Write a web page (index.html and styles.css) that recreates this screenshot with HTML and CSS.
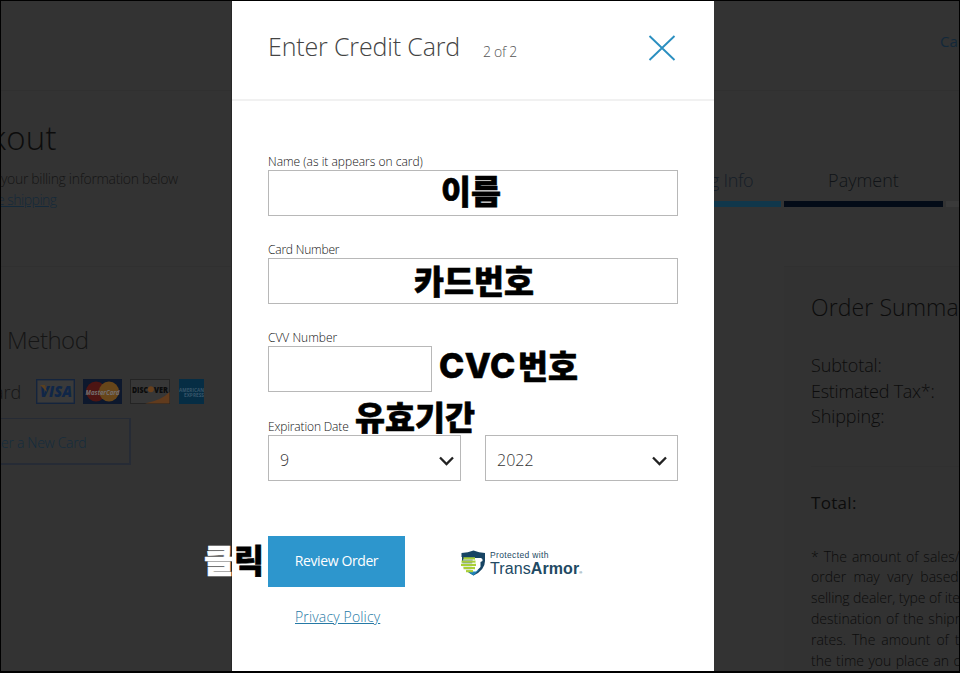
FILE: index.html
```html
<!DOCTYPE html>
<html lang="ko">
<head>
<meta charset="utf-8">
<title>Checkout</title>
<link rel="stylesheet" href="styles.css">
</head>
<body>
<div class="screen">
  <section class="left">
    <div class="topbar"></div>
    <div class="intro">
      <h1>kout</h1>
      <p class="billing">your billing information below</p>
      <a class="shipping">e shipping</a>
    </div>
    <h2 class="method">Method</h2>
    <div class="cards">
      <span class="card-label">ard</span>
      <svg width="39" height="25" viewBox="0 0 39 25"><rect x=".7" y=".7" width="37.6" height="23.6" fill="#3a3a3a" stroke="#14243d" stroke-width="1.4"/><text x="4" y="18" class="visa" textLength="32" lengthAdjust="spacingAndGlyphs">VISA</text><path d="M4 6h5l2 7z" fill="#594020"/></svg>
      <svg width="39" height="25" viewBox="0 0 39 25"><rect width="39" height="25" fill="#0d182d"/><circle cx="13" cy="12.5" r="10" fill="#4d1513"/><circle cx="26" cy="12.5" r="10" fill="#67461a"/><text x="2.5" y="15.5" class="mc" textLength="34" lengthAdjust="spacingAndGlyphs">MasterCard</text></svg>
      <svg width="40" height="25" viewBox="0 0 40 25"><rect x=".5" y=".5" width="39" height="24" fill="#373737" stroke="#242424"/><path d="M15 24.500Q32 21 39.500 13V24.500z" fill="#613b1d"/><circle cx="20.800" cy="10.300" r="3" fill="#69401c"/><text x="2" y="13.500" class="disc" textLength="16" lengthAdjust="spacingAndGlyphs">DISC</text><text x="24" y="13.500" class="disc" textLength="14" lengthAdjust="spacingAndGlyphs">VER</text></svg>
      <svg class="amex" width="25" height="25" viewBox="0 0 25 25"><rect width="25" height="25" fill="#062d44"/><text x="0" y="12.500" class="ax" textLength="25" lengthAdjust="spacingAndGlyphs">AMERICAN</text><text x="5" y="17.500" class="ax" textLength="20" lengthAdjust="spacingAndGlyphs">EXPRESS</text></svg>
    </div>
    <div class="newcard">er a New Card</div>
  </section>

  <main class="modal">
    <header>
      <h2 class="title">Enter Credit Card</h2>
      <span class="count">2 of 2</span>
      <svg class="close" width="28" height="26" viewBox="0 0 28 26"><path d="M1.500 1 26.500 25M26.500 1 1.500 25" stroke="#2b8fc0" stroke-width="1.900" fill="none"/></svg>
    </header>
    <form>
      <label class="l-name">Name (as it appears on card)</label>
      <div class="box"></div>
      <label class="l-num">Card Number</label>
      <div class="box"></div>
      <label class="l-cvv">CVV Number</label>
      <div class="box cvv"></div>
      <label class="l-exp">Expiration Date</label>
      <div class="selects">
        <div class="box select"><span>9</span><svg width="15" height="10" viewBox="0 0 15 10"><path d="M1 1.500 7.500 8 14 1.500" fill="none" stroke="#222" stroke-width="2.300"/></svg></div>
        <div class="box select year"><span>2022</span><svg width="15" height="10" viewBox="0 0 15 10"><path d="M1 1.500 7.500 8 14 1.500" fill="none" stroke="#222" stroke-width="2.300"/></svg></div>
      </div>
      <div class="actions">
        <button type="button"><span>Review Order</span></button>
        <div class="armor">
          <svg width="25" height="26" viewBox="0 0 25 26"><path d="M.5 3Q7 2.500 12.500.5 18 2.500 24 3V11Q24 20 12.500 25.500 4 21 1.500 15L1 10V7H.5z" fill="#174463"/><path d="M5 20H18L12.500 25.500Q8 23 5 20z" fill="#2083b7"/><path d="M12 8H20Q22 8.500 21.500 11L19.500 12V17L15 21.500H10z" fill="#fff"/><path d="M2.500 8.500H14M.5 11.700H14.500M0 14.900H15M2.500 18.100H14M5 21H12" stroke="#a9cf38" stroke-width="2.300"/><path d="M2 10H13.500M1 13.300H13.500M1 16.500H14M4 19.600H13" stroke="#f5faea" stroke-width=".9"/></svg>
          <div class="armor-text"><span class="protected">Protected with</span><span class="brand">Trans<b>Armor</b><i>®</i></span></div>
        </div>
      </div>
      <a class="privacy">Privacy Policy</a>
    </form>
  </main>

  <section class="right">
    <div class="topbar"><span class="cart">Ca</span></div>
    <div class="steps">
      <div class="step one"><span>g Info</span></div>
      <div class="step two"><span>Payment</span></div>
      <div class="step three"></div>
    </div>
    <aside class="summary">
      <h3>Order Summa</h3>
      <ul>
        <li class="sub">Subtotal:</li>
        <li class="tax">Estimated Tax*:</li>
        <li class="ship">Shipping:</li>
      </ul>
      <div class="total"><span>Total:</span></div>
      <div class="note">
        <p class="n1">* The amount of sales/</p>
        <p class="n2">order may vary based</p>
        <p class="n3">selling dealer, type of ite</p>
        <p class="n4">destination of the shipm</p>
        <p class="n5">rates. The amount of t</p>
        <p class="n6">the time you place an o</p>
      </div>
    </aside>
  </section>

  <div class="mark m-name">이름</div>
  <div class="mark m-num">카드번호</div>
  <div class="mark m-cvc"><span>CVC</span>번호</div>
  <div class="mark m-exp">유효기간</div>
  <div class="mark m-click"><span>클</span>릭</div>
</div>
</body>
</html>
```
FILE: styles.css
```css
* { box-sizing: border-box; }
body { margin: 0; background: #000; font-family: "Open Sans", "Noto Sans CJK KR", sans-serif; font-weight: 300; }
h1, h2, h3, p, ul { margin: 0; padding: 0; font-weight: 300; list-style: none; }
svg { display: block; flex: none; }
.screen { position: relative; width: 960px; height: 673px; padding: 1px 1px 2px; overflow: hidden; display: grid; grid-template-columns: 231px 482px 245px; grid-template-rows: 670px; background: #000; white-space: nowrap; }
.left, .right { background: #333; overflow: hidden; min-width: 0; color: #151515; }
.left { border-right: 1px solid #282828; }
.topbar { height: 90px; border-bottom: 1px solid #303030; }

.intro { height: 176px; border-bottom: 1px solid #303030; padding-top: 24px; display: flex; flex-direction: column; align-items: flex-start; }
h1 { font-size: 33px; line-height: 46px; margin-left: -11px; letter-spacing: .2px; color: #0c0c0c; }
.billing { font-size: 14px; line-height: 20px; margin-top: 8px; letter-spacing: -.33px; }
.shipping { font-size: 14px; line-height: 20px; margin-top: 1px; margin-left: -4px; letter-spacing: -.5px; color: #14293a; text-decoration: underline; }
.method { font-size: 24px; line-height: 32px; margin: 57px 0 0 6px; letter-spacing: -.5px; }
.cards { display: flex; height: 26px; margin-top: 22px; }
.card-label { width: 35px; font-size: 18px; line-height: 29px; margin-left: -7px; }
.cards svg { margin: 1px 0 0 7px; }
.cards svg + svg { margin-left: 8px; }
.cards .amex { margin-left: 9px; }
.visa { font: italic 800 16px "Open Sans"; fill: #102647; }
.mc { font: italic 700 7px "Open Sans"; fill: #747070; }
.disc { font: 800 8px "Open Sans"; fill: #0b0b0b; }
.ax { font: 700 5px "Open Sans"; fill: #38566a; }
.newcard { width: 130px; height: 47px; margin-top: 14px; border: 1px solid #262b35; border-width: 1px 2px 2px 0; font-size: 14px; line-height: 47px; color: #142c3d; letter-spacing: -.3px; }

.modal { background: #fff; color: #444; }
header { height: 100px; border-bottom: 2px solid #f1f1f1; padding: 0 38px 0 36px; display: flex; align-items: flex-start; }
.title { width: 215px; font-size: 25px; line-height: 34px; margin-top: 28px; color: #444; letter-spacing: -.15px; }
.count { font-size: 14px; line-height: 20px; margin-top: 41px; color: #555; letter-spacing: -.3px; }
.close { margin: 34px 0 0 auto; }
form { padding: 51px 36px 0; }
label { display: block; height: 18px; font-size: 12px; line-height: 20px; color: #111; }
.l-num { letter-spacing: -.2px; }
.l-exp { letter-spacing: -.15px; line-height: 19px; }
.box { height: 46px; border: 1px solid #b8b8b8; margin-bottom: 24px; }
.cvv { width: 164px; margin-bottom: 25px; }
.selects { display: flex; gap: 24px; }
.select { flex: 1; display: flex; align-items: center; justify-content: space-between; padding: 3px 10px 0 11px; font-size: 16px; color: #333; margin: 0; }
.select span { margin-top: 0; }
.select svg { margin-right: -4px; margin-top: 3px; }
.year svg { margin-right: 0; }
.actions { display: flex; margin-top: 55px; height: 51px; }
button { width: 137px; height: 51px; border: 0; padding: 0 0 2px; background: #2d96cd; color: #fff; font: 400 14px "Open Sans"; letter-spacing: -.4px; }
.armor { display: flex; margin: 14px 0 0 56px; }
.armor-text { display: flex; flex-direction: column; margin-left: 4px; color: #224963; font-family: "Liberation Sans"; }
.protected { font-size: 8.500px; line-height: 10px; height: 9px; font-weight: 400; letter-spacing: .35px; }
.brand { font-size: 16px; line-height: 20px; font-weight: 400; letter-spacing: .1px; }
.brand i { font-size: 4px; font-style: normal; }
.privacy { display: block; width: 90px; margin: 20px 0 0 27px; font-size: 14px; line-height: 20px; color: #2679a5; text-decoration: underline; letter-spacing: .15px; }

.cart { display: block; margin-left: 226px; padding-top: 30px; font-size: 15px; line-height: 20px; font-weight: 400; color: #12283a; }
.steps { display: flex; gap: 3px; height: 175px; padding-top: 75px; }
.step { height: 41px; border-bottom: 6px solid #10374b; font-size: 18px; line-height: 28px; color: #151d27; }
.one { width: 67px; letter-spacing: -.3px; }
.one span { margin-left: -4px; }
.two { width: 159px; border-color: #030b17; text-align: center; color: #101317; }
.three { width: 13px; border-color: #3a3a3a; }
.summary { margin-left: 70px; height: 404px; padding: 23px 0 0 27px; background: #323232; border-top: 1px solid #303030; color: #0c0c0c; }
h3 { font-size: 23px; line-height: 34px; letter-spacing: .1px; }
li { font-size: 18px; line-height: 25.500px; letter-spacing: -.1px; }
.tax { letter-spacing: -.25px; }
ul { margin-top: 29px; }
.total { border-top: 1px solid #303030; padding-top: 23px; margin-top: 36px; font-size: 17px; line-height: 26px; font-weight: 400; letter-spacing: .3px; }
.note { margin-top: 31px; font-size: 14px; line-height: 20.900px; color: #0c0c0c; }
.n1 { word-spacing: 1.300px; }
.n2 { word-spacing: 3.800px; }
.n3 { letter-spacing: -.1px; }
.n4 { word-spacing: 1px; }
.n5 { word-spacing: 2.300px; }
.n6 { word-spacing: .8px; }

.mark { position: absolute; color: #000; font: 900 32.600px/40px "Noto Sans CJK KR"; -webkit-text-stroke: .6px currentColor; }
.m-name { left: 441px; top: 170px; }
.m-num { left: 414px; top: 260px; }
.m-cvc { left: 439px; top: 345px; display: flex; }
.m-cvc span { width: 79px; font: 800 34px/41px Inter; letter-spacing: .5px; }
.m-exp { left: 355px; top: 396px; }
.m-click { left: 204px; top: 539px; }
.m-click span { color: #fff; }
```
